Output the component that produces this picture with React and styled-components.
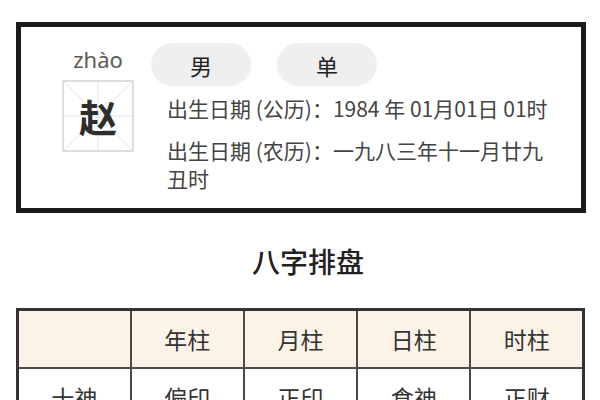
import styled, { createGlobalStyle } from 'styled-components';

const GlobalStyle = createGlobalStyle`
  body {
    margin: 0;
    background: #fff;
    font-family: "Noto Sans CJK SC", "Noto Sans", sans-serif;
    color: #333;
  }
`;

const Page = styled.div`
  padding: 22px 14px 0 16px;
`;

const Card = styled.div`
  display: flex;
  border: 5px solid #1b1b1b;
  padding: 16px 20px 16px 41px;
`;

const NameColumn = styled.div`
  display: flex;
  flex-direction: column;
  align-items: center;
  width: 72px;
  padding-top: 4px;
  flex-shrink: 0;
`;

const Pinyin = styled.div`
  font-family: "Noto Sans", sans-serif;
  font-size: 22px;
  line-height: 24px;
  color: #5a5a5a;
  margin-bottom: 9px;
`;

const CharBox = styled.div`
  position: relative;
  width: 72px;
  height: 72px;
  box-sizing: border-box;
  border: 2px solid #ddd;
  display: flex;
  align-items: center;
  justify-content: center;
  font-size: 38px;
  font-weight: 600;
  color: #2d2d2d;
`;

const Guides = styled.svg`
  position: absolute;
  inset: 0;
  width: 100%;
  height: 100%;
`;

const Glyph = styled.span`
  position: relative;
  line-height: 1;
`;

const InfoColumn = styled.div`
  flex: 1;
  margin-left: 17px;
`;

const Tags = styled.div`
  display: flex;
  gap: 26px;
  margin-bottom: 8px;
`;

const Tag = styled.div`
  width: 100px;
  height: 43px;
  border-radius: 22px;
  background: #efefef;
  display: flex;
  align-items: center;
  justify-content: center;
  font-size: 22px;
  color: #222;
`;

const InfoLine = styled.div`
  padding-left: 16px;
  font-size: 21px;
  line-height: 28px;
  color: #444;
  & + & {
    margin-top: 14px;
  }
`;

const Title = styled.h2`
  margin: 30px 0 29px;
  padding-left: 14px;
  text-align: center;
  font-size: 28px;
  line-height: 36px;
  font-weight: 500;
  color: #222;
`;

const Table = styled.table`
  width: 569px;
  border-collapse: collapse;
  table-layout: fixed;
  border: 3px solid #333;
`;

const Cell = styled.td`
  height: 56px;
  border: 2px solid #4a4a4a;
  text-align: center;
  font-size: 23px;
  color: #333;
  background: ${p => (p.$head ? '#fcf3e8' : '#fff')};
  padding: 0;
`;

const pillars = ['年柱', '月柱', '日柱', '时柱'];
const shishen = ['偏印', '正印', '食神', '正财'];

export default function App() {
  return (
    <>
      <GlobalStyle />
      <Page>
        <Card>
          <NameColumn>
            <Pinyin>zhào</Pinyin>
            <CharBox>
              <Guides viewBox="0 0 68 68" preserveAspectRatio="none">
                <line x1="0" y1="0" x2="68" y2="68" stroke="#e6e6e6" strokeWidth="1" />
                <line x1="68" y1="0" x2="0" y2="68" stroke="#e6e6e6" strokeWidth="1" />
                <line x1="34" y1="0" x2="34" y2="68" stroke="#e6e6e6" strokeWidth="1" />
                <line x1="0" y1="34" x2="68" y2="34" stroke="#e6e6e6" strokeWidth="1" />
              </Guides>
              <Glyph>赵</Glyph>
            </CharBox>
          </NameColumn>
          <InfoColumn>
            <Tags>
              <Tag>男</Tag>
              <Tag>单</Tag>
            </Tags>
            <InfoLine>出生日期 (公历)：1984 年 01月01日 01时</InfoLine>
            <InfoLine>出生日期 (农历)：一九八三年十一月廿九丑时</InfoLine>
          </InfoColumn>
        </Card>
        <Title>八字排盘</Title>
        <Table>
          <tbody>
            <tr>
              <Cell $head />
              {pillars.map(p => (
                <Cell $head key={p}>{p}</Cell>
              ))}
            </tr>
            <tr>
              <Cell>十神</Cell>
              {shishen.map(s => (
                <Cell key={s}>{s}</Cell>
              ))}
            </tr>
          </tbody>
        </Table>
      </Page>
    </>
  );
}
